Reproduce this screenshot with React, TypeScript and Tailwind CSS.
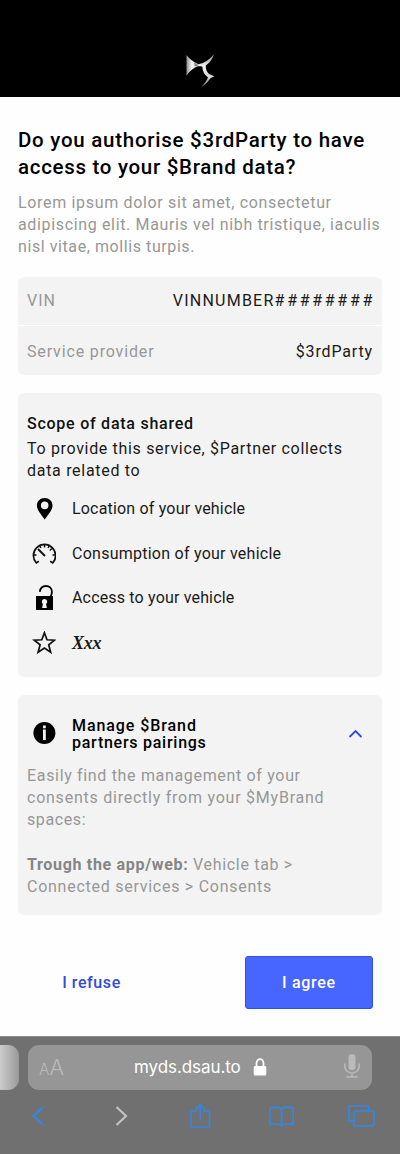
import React from "react";

function Logo() {
  return (
    <svg width="32" height="36" viewBox="0 0 32 36" fill="none">
      <defs>
        <linearGradient id="wing" x1="0" y1="0" x2="1" y2="0">
          <stop offset="0" stopColor="#8f8f8f" />
          <stop offset="0.35" stopColor="#f4f4f4" />
          <stop offset="1" stopColor="#b5b5b5" />
        </linearGradient>
        <linearGradient id="arm" x1="0" y1="0" x2="0" y2="1">
          <stop offset="0" stopColor="#8a8a8a" />
          <stop offset="0.35" stopColor="#f0f0f0" />
          <stop offset="0.7" stopColor="#d6d6d6" />
          <stop offset="1" stopColor="#777" />
        </linearGradient>
      </defs>
      <path d="M2.500 2 Q7 8 14 11 L18 10.800 L18 13 L14 13.200 Q8 15 2.500 22.500 Z" fill="url(#wing)" />
      <path d="M10 9.500 L14.500 12 L12 13.400 L10.500 12.500 Z" fill="#333" opacity="0.5" />
      <path d="M14.500 11.200 Q22 10.500 30 1.200 Q27.500 8.500 21.800 12.500 Q21.500 18 25 21 L30.300 23.200 L26.500 25.200 Q23 30.500 17 34.500 Q22.500 28.500 24 24.500 Q18.500 20.500 18.300 13.600 L14.500 13 Z" fill="url(#arm)" />
    </svg>
  );
}

function Pin() {
  return (
    <svg width="24" height="24" viewBox="0 0 24 24">
      <path fillRule="evenodd" fill="#000" d="M12.700 1 C8.200 1 4.900 4.200 4.900 8.500 C4.900 13.500 9.700 18 12.700 22.500 C15.700 18 20.500 13.500 20.500 8.500 C20.500 4.200 17.200 1 12.700 1 Z M12.700 4.600 A3.800 3.800 0 1 1 12.700 12.200 A3.800 3.800 0 1 1 12.700 4.600 Z" />
    </svg>
  );
}

function Gauge() {
  return (
    <svg width="24" height="24" viewBox="0 0 24 24" fill="none" stroke="#111" strokeWidth="1.700">
      <path d="M6.800 19.300 L4.300 21 A11.100 11.100 0 1 1 20.700 21 L18.200 19.300" />
      <path d="M6 7 L13 14" strokeWidth="2" />
      <path d="M12.500 2.500 V5.500 M1.500 13 H4.500 M20.500 13 H23.500 M20 6.500 L17.800 8.500 M7.700 3.500 L8.900 6 M17.300 3.500 L16.100 6" strokeWidth="1.500" />
    </svg>
  );
}

function Unlock() {
  return (
    <svg width="24" height="28" viewBox="0 0 24 28" fill="none">
      <path d="M7.800 7.800 C8.300 4.200 10.500 2 13.900 2 C17.600 2 19.900 4.500 19.900 7.800 C19.900 9.800 19.400 11.300 18.600 13" stroke="#000" strokeWidth="1.800" />
      <path fillRule="evenodd" fill="#000" d="M4 12 H21 V26 H4 Z M12.500 15 A2.700 2.700 0 0 0 10.900 19.900 L10.100 24 H14.900 L14.100 19.900 A2.700 2.700 0 0 0 12.500 15 Z" />
    </svg>
  );
}

function Star() {
  return (
    <svg width="24" height="24" viewBox="0 0 24 24" fill="none" stroke="#111" strokeWidth="1.700">
      <path d="M12.400 1.800 L15 8.800 L22.500 9.200 L16.700 13.800 L18.700 21.200 L12.400 17 L6.100 21.200 L8.100 13.800 L2.300 9.200 L9.800 8.800 Z" />
    </svg>
  );
}

function InfoBadge() {
  return (
    <svg width="24" height="24" viewBox="0 0 24 24">
      <circle cx="12.400" cy="12" r="11" fill="#000" />
      <rect x="11" y="4.500" width="2.800" height="2.800" fill="#f3f3f3" />
      <rect x="11" y="8.500" width="2.800" height="10.500" fill="#f3f3f3" />
    </svg>
  );
}

const scopes = [
  { icon: <Pin />, label: "Location of your vehicle", style: "tracking-[0.180px]" },
  { icon: <Gauge />, label: "Consumption of your vehicle", style: "tracking-[0.250px]" },
  { icon: <Unlock />, label: "Access to your vehicle", style: "tracking-[0.170px]" },
  { icon: <Star />, label: "Xxx", style: "font-['Liberation_Serif',serif] italic text-[18px] font-bold tracking-[-0.300px]" },
];

function Header() {
  return (
    <header className="flex h-[97px] justify-center bg-black pt-[53px]">
      <Logo />
    </header>
  );
}

function BrowserBar() {
  return (
    <footer className="h-[118px] overflow-hidden border-t border-[#8c8c8c] bg-[#707070]">
      <div className="flex pt-2">
        <div className="h-[45px] w-[19px] rounded-r-[11px] bg-gradient-to-r from-[#cccccc] to-[#999999]" />
        <div className="ml-[9px] flex h-[45px] w-[344px] items-center rounded-[11px] bg-[#969696] pr-[11px] pl-[11px] font-['Inter',sans-serif]">
          <span className="flex w-[95px] items-baseline pt-px font-light text-[#bababa]">
            <span className="text-[15.500px]">A</span>
            <span className="text-[21.500px]">A</span>
          </span>
          <span className="w-[109px] pb-0.5 text-[17px] tracking-[-0.080px] whitespace-nowrap text-white">myds.dsau.to</span>
          <svg className="mb-0.5 ml-[10px]" width="14" height="18" viewBox="0 0 14 18" fill="none">
            <path d="M3.500 9 V5 A3.500 3.800 0 0 1 10.500 5 V9" stroke="#fff" strokeWidth="1.700" />
            <rect x="0.700" y="8" width="12.600" height="9.500" rx="1.500" fill="#fff" />
          </svg>
          <svg className="mb-[3px] ml-auto" width="18" height="26" viewBox="0 0 18 26" fill="none" stroke="#bababa" strokeWidth="1.500">
            <rect x="5.500" y="1" width="7" height="16" rx="3.500" fill="#bababa" stroke="none" />
            <path d="M1.700 10.500 V13 A7.300 7 0 0 0 16.300 13 V10.500 M9 20 V24 M3.500 24 H14.500" />
          </svg>
        </div>
      </div>
      <div className="flex pt-[13px]">
        <svg width="80" height="28" viewBox="0 0 80 28" fill="none" stroke="#3386e2" strokeWidth="2.200">
          <path d="M43 4 L33.500 13 L43 22" />
        </svg>
        <svg width="80" height="28" viewBox="80 0 80 28" fill="none" stroke="#c2c2c2" strokeWidth="2.200">
          <path d="M116.500 4 L126 13 L116.500 22" />
        </svg>
        <svg width="80" height="28" viewBox="160 0 80 28" fill="none" stroke="#3386e2" strokeWidth="1.700">
          <path d="M197 8 H191 V24 H209.500 V8 H203.500 M200.200 17 V2 M195.500 6.500 L200.200 1.800 L205 6.500" />
        </svg>
        <svg width="80" height="28" viewBox="240 0 80 28" fill="none" stroke="#3386e2" strokeWidth="1.700">
          <path d="M281.500 6.500 C279 3 272.500 3 269.800 6 V22 C272.500 20.500 279 20.500 281.500 23 C284 20.500 290.500 20.500 293.200 22 V6 C290.500 3 284 3 281.500 6.500 Z V23" />
        </svg>
        <svg width="80" height="28" viewBox="320 0 80 28" fill="none" stroke="#3386e2" strokeWidth="1.700">
          <rect x="354" y="8" width="20" height="15" rx="2" />
          <path d="M354 18 H350.800 Q348.800 18 348.800 16 V5 Q348.800 3 350.800 3 H367 Q369 3 369 5 V8" />
        </svg>
      </div>
    </footer>
  );
}

export default function App() {
  return (
    <div className="flex h-[1154px] w-[400px] flex-col overflow-hidden bg-[#fefefe] font-['Roboto',sans-serif] text-[16px] leading-[22px] whitespace-nowrap text-[#1a1a1a]">
      <Header />
      <main className="h-[939px] px-[18px] pt-[30px]">
        <h1 className="text-[20.500px] leading-[27px] font-medium text-black">
          <span className="block tracking-[0.740px]">Do you authorise $3rdParty to have</span>
          <span className="block tracking-[0.700px]">access to your $Brand data?</span>
        </h1>
        <p className="mt-[11px] text-[#979797]">
          <span className="block tracking-[0.670px]">Lorem ipsum dolor sit amet, consectetur</span>
          <span className="block tracking-[0.650px]">adipiscing elit. Mauris vel nibh tristique, iaculis</span>
          <span className="block tracking-[0.580px]">nisl vitae, mollis turpis.</span>
        </p>

        <section className="mt-[19px] h-[98px] rounded-[6px] bg-[#f3f3f3]">
          <div className="flex h-[49px] items-center justify-between border-b border-white px-[9px]">
            <span className="tracking-[1px] text-[#979797]">VIN</span>
            <span className="-mr-[2px] tracking-[2.700px]"><span className="tracking-[1.250px]">VINNUMBER</span>########</span>
          </div>
          <div className="flex h-[49px] items-center justify-between px-[9px] pt-0.5">
            <span className="tracking-[0.850px] text-[#979797]">Service provider</span>
            <span className="tracking-[0.850px]">$3rdParty</span>
          </div>
        </section>

        <section className="mt-[18px] h-[284px] rounded-[6px] bg-[#f3f3f3] px-[9px] pt-[20px]">
          <h2 className="font-medium tracking-[0.750px] text-[#111]">Scope of data shared</h2>
          <p className="mt-[3px]">
            <span className="block tracking-[0.670px]">To provide this service, $Partner collects</span>
            <span className="block tracking-[0.700px]">data related to</span>
          </p>
          <ul className="mt-[5px]">
            {scopes.map((s) => (
              <li key={s.label} className="flex h-[44.500px] items-center pl-[5px]">
                <span className="flex w-10 items-center">{s.icon}</span>
                <span className={s.style}>{s.label}</span>
              </li>
            ))}
          </ul>
        </section>

        <section className="mt-[18px] h-[220px] rounded-[6px] bg-[#f3f3f3] px-[9px] pt-[22px]">
          <div className="flex h-[34px] items-center pl-[5px]">
            <span className="w-10 pb-0.5"><InfoBadge /></span>
            <h2 className="leading-[17px] font-medium text-black">
              <span className="block tracking-[0.920px]">Manage $Brand</span>
              <span className="block tracking-[0.740px]">partners pairings</span>
            </h2>
            <svg className="mr-[10px] mb-px ml-auto" width="15" height="10" viewBox="0 0 15 10" fill="none" stroke="#2b4bea" strokeWidth="1.800">
              <path d="M1.500 8 L7.500 2 L13.500 8" />
            </svg>
          </div>
          <div className="mt-[14px] text-[#979797]">
            <span className="block tracking-[0.670px]">Easily find the management of your</span>
            <span className="block tracking-[0.760px]">consents directly from your $MyBrand</span>
            <span className="block tracking-[0.600px]">spaces:</span>
            <p className="mt-[23px]">
              <span className="block tracking-[0.680px]"><b className="font-bold text-[#858585]">Trough the app/web:</b> Vehicle tab &gt;</span>
              <span className="block tracking-[0.740px]">Connected services &gt; Consents</span>
            </p>
          </div>
        </section>

        <div className="mt-[41px] flex pr-[9px] font-medium">
          <button className="h-[53px] w-[147px] pt-px tracking-[0.600px] text-[#2f4be0]">I refuse</button>
          <button className="ml-auto h-[53px] w-[128px] rounded-[3px] border border-[#3350e0] bg-[#4666ff] pt-px tracking-[0.700px] text-white">I agree</button>
        </div>
      </main>
      <BrowserBar />
    </div>
  );
}
